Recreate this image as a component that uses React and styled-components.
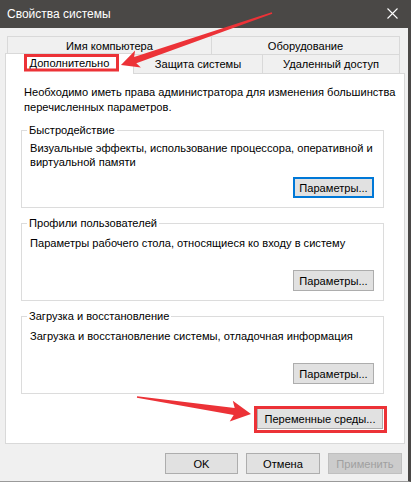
import React from 'react';
import styled, { createGlobalStyle } from 'styled-components';

const GlobalStyle = createGlobalStyle`
  html, body {
    margin: 0;
    padding: 0;
    background: #ffffff;
  }
  body {
    font-family: "Liberation Sans", Arial, sans-serif;
    font-size: 11.1px;
    color: #000;
  }
`;

const Window = styled.div`
  position: relative;
  width: 408px;
  height: 481px;
  background: #f0f0f0;
  border-right: 3px solid #4a4846;
  border-bottom: 1px solid #9a9a9a;
  display: flex;
  flex-direction: column;
  overflow: hidden;
`;

const TitleBar = styled.div`
  height: 27px;
  flex-shrink: 0;
  background: #4a4846;
  color: #fff;
  display: flex;
  align-items: center;
  justify-content: space-between;
  padding: 0 10px 1px 7px;
  font-size: 12px;
`;

const CloseIcon = styled.svg`
  display: block;
  width: 11px;
  height: 11px;
`;

const TabStrip = styled.div`
  margin: 8px 0 0 5px;
  display: flex;
  flex-direction: column;
`;

const TabRow = styled.div`
  display: flex;
  align-items: flex-end;
  height: ${p => p.$h}px;
  padding-left: ${p => p.$indent}px;
`;

const Tab = styled.div`
  position: relative;
  box-sizing: border-box;
  width: ${p => p.$w}px;
  height: ${p => (p.$active ? p.$h + 2 : p.$h)}px;
  margin-left: -1px;
  border: 1px solid #d9d9d9;
  border-bottom: none;
  background: ${p => (p.$active ? '#ffffff' : '#f0f0f0')};
  display: flex;
  align-items: center;
  justify-content: center;
  padding-bottom: ${p => (p.$active ? 3 : 0)}px;
  margin-bottom: ${p => (p.$active ? -1 : 0)}px;
  z-index: ${p => (p.$active ? 2 : 0)};
  white-space: nowrap;

  &:first-child {
    margin-left: 0;
  }
`;

const Panel = styled.div`
  position: relative;
  z-index: 1;
  box-sizing: border-box;
  width: 400px;
  height: 371px;
  flex-shrink: 0;
  margin-left: 5px;
  background: #ffffff;
  border: 1px solid #d9d9d9;
  padding: 11px 20px 0 15px;
  display: flex;
  flex-direction: column;
`;

const Intro = styled.p`
  margin: 0 0 8px 3px;
  line-height: 15px;
  white-space: nowrap;
`;

const Group = styled.fieldset`
  margin: 0 0 8px 0;
  padding: 5px 9px 9px 8px;
  border: 1px solid #dcdcdc;
  min-width: 0;

  legend {
    padding: 0 2px;
    margin-left: -3px;
    line-height: 14px;
  }
`;

const GroupText = styled.div`
  box-sizing: border-box;
  height: 27px;
  padding-top: ${p => (p.$single ? 2 : 0)}px;
  line-height: 13.5px;
  white-space: nowrap;
`;

const ButtonRow = styled.div`
  display: flex;
  justify-content: flex-end;
  gap: 8px;
  margin-top: ${p => p.$top || 0}px;
  padding-right: ${p => p.$right || 0}px;
`;

const Button = styled.button`
  box-sizing: border-box;
  width: ${p => p.$w}px;
  height: 21px;
  padding: 0;
  font-family: inherit;
  font-size: 11.1px;
  color: ${p => (p.disabled ? '#a0a0a0' : '#000')};
  background: ${p => (p.disabled ? '#cccccc' : '#e1e1e1')};
  border: ${p =>
    p.$focused ? '2px solid #0078d7' : p.disabled ? '1px solid #bfbfbf' : '1px solid #adadad'};
  white-space: nowrap;
`;

const Footer = styled.div`
  display: flex;
  justify-content: flex-end;
  gap: 8px;
  padding: 9px 6px 0 0;
`;

const Annotations = styled.svg`
  position: absolute;
  top: 0;
  left: 0;
  width: 411px;
  height: 482px;
  pointer-events: none;
  z-index: 10;
`;

const RED = '#ec3237';

// tapered annotation arrow: thin tail, wide head at tip
function arrowPoints([tx, ty], [px, py], headLen, headHalf, shaftHalf, tailHalf = 0.8, sweep = 3) {
  const dx = px - tx;
  const dy = py - ty;
  const len = Math.hypot(dx, dy);
  const ux = dx / len;
  const uy = dy / len;
  const nx = -uy;
  const ny = ux;
  const bx = px - ux * headLen;
  const by = py - uy * headLen;
  const wx = bx - ux * sweep;
  const wy = by - uy * sweep;
  const pts = [
    [tx + nx * tailHalf, ty + ny * tailHalf],
    [bx + nx * shaftHalf, by + ny * shaftHalf],
    [wx + nx * headHalf, wy + ny * headHalf],
    [px, py],
    [wx - nx * headHalf, wy - ny * headHalf],
    [bx - nx * shaftHalf, by - ny * shaftHalf],
    [tx - nx * tailHalf, ty - ny * tailHalf],
  ];
  return pts.map(p => p.map(v => v.toFixed(1)).join(',')).join(' ');
}

const groups = [
  {
    title: 'Быстродействие',
    lines: ['Визуальные эффекты, использование процессора, оперативной и', 'виртуальной памяти'],
    focused: true,
  },
  {
    title: 'Профили пользователей',
    lines: ['Параметры рабочего стола, относящиеся ко входу в систему'],
  },
  {
    title: 'Загрузка и восстановление',
    lines: ['Загрузка и восстановление системы, отладочная информация'],
  },
];

export default function App() {
  return (
    <>
      <GlobalStyle />
      <Window>
        <TitleBar>
          <span>Свойства системы</span>
          <CloseIcon viewBox="0 0 11 11">
            <path d="M0.5 0.5 L10.5 10.5 M10.5 0.5 L0.5 10.5" stroke="#fff" strokeWidth="1.1" />
          </CloseIcon>
        </TitleBar>

        <TabStrip>
          <TabRow $h={18} $indent={2}>
            <Tab $w={205} $h={18}>Имя компьютера</Tab>
            <Tab $w={189} $h={18}>Оборудование</Tab>
          </TabRow>
          <TabRow $h={19} $indent={0}>
            <Tab $w={129} $h={19} $active>Дополнительно</Tab>
            <Tab $w={130} $h={19}>Защита системы</Tab>
            <Tab $w={138} $h={19}>Удаленный доступ</Tab>
          </TabRow>
        </TabStrip>

        <Panel>
          <Intro>
            Необходимо иметь права администратора для изменения большинства
            <br />
            перечисленных параметров.
          </Intro>
          {groups.map(g => (
            <Group key={g.title}>
              <legend>{g.title}</legend>
              <GroupText $single={g.lines.length === 1}>
                {g.lines.map(l => (
                  <div key={l}>{l}</div>
                ))}
              </GroupText>
              <ButtonRow $top={8}>
                <Button $w={81} $focused={g.focused}>Параметры...</Button>
              </ButtonRow>
            </Group>
          ))}
          <ButtonRow $top={6} $right={1}>
            <Button $w={126}>Переменные среды...</Button>
          </ButtonRow>
        </Panel>

        <Footer>
          <Button $w={73}>OK</Button>
          <Button $w={74}>Отмена</Button>
          <Button $w={74} disabled>Применить</Button>
        </Footer>

        <Annotations viewBox="0 0 411 482">
          <polygon points={arrowPoints([272, 13], [121, 65], 15, 9, 3.4)} fill={RED} />
          <rect x="25.5" y="55.5" width="92" height="14.5" fill="none" stroke={RED} strokeWidth="3" />
          <polygon points={arrowPoints([137, 397], [251, 414], 17, 10.5, 3.6)} fill={RED} />
          <rect x="255.5" y="407.5" width="130" height="24" fill="none" stroke={RED} strokeWidth="3" />
        </Annotations>
      </Window>
    </>
  );
}
